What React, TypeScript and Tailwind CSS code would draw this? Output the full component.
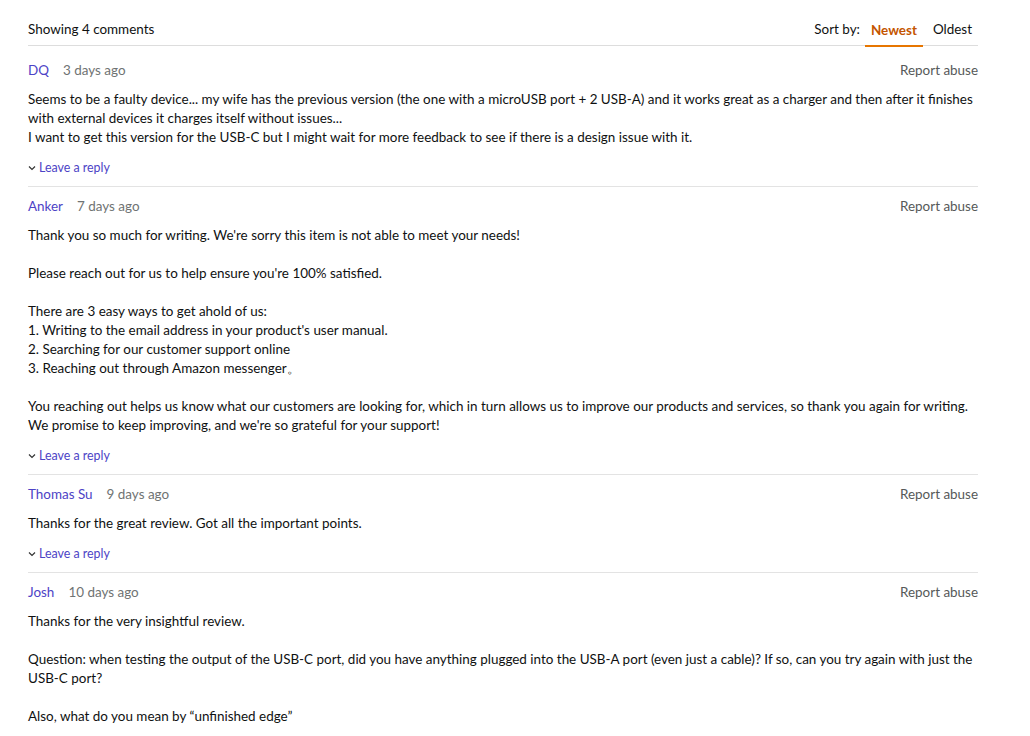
import React from "react";

type C = { name: string; time: string; body: string };

const comments: C[] = [
  {
    name: "DQ",
    time: "3 days ago",
    body:
      "Seems to be a faulty device... my wife has the previous version (the one with a microUSB port + 2 USB-A) and it works great as a charger and then after it finishes with external devices it charges itself without issues...\nI want to get this version for the USB-C but I might wait for more feedback to see if there is a design issue with it.",
  },
  {
    name: "Anker",
    time: "7 days ago",
    body:
      "Thank you so much for writing. We're sorry this item is not able to meet your needs!\n\nPlease reach out for us to help ensure you're 100% satisfied.\n\nThere are 3 easy ways to get ahold of us:\n1. Writing to the email address in your product's user manual.\n2. Searching for our customer support online\n3. Reaching out through Amazon messenger\u3002\n\nYou reaching out helps us know what our customers are looking for, which in turn allows us to improve our products and services, so thank you again for writing.\nWe promise to keep improving, and we're so grateful for your support!",
  },
  {
    name: "Thomas Su",
    time: "9 days ago",
    body: "Thanks for the great review. Got all the important points.",
  },
  {
    name: "Josh",
    time: "10 days ago",
    body:
      "Thanks for the very insightful review.\n\nQuestion: when testing the output of the USB-C port, did you have anything plugged into the USB-A port (even just a cable)? If so, can you try again with just the USB-C port?\n\nAlso, what do you mean by \u201cunfinished edge\u201d",
  },
];

function Chevron() {
  return (
    <svg width="8" height="6" viewBox="0 0 8 6" className="mr-[3px]">
      <path d="M1 1.5 L4 4.5 L7 1.5" fill="none" stroke="#333" strokeWidth="1.2" />
    </svg>
  );
}

export default function App() {
  return (
    <div
      className="bg-white min-h-[736px] text-[13.45px] text-[#0f1111]"
      style={{ fontFamily: "Lato, 'Noto Sans', sans-serif" }}
    >
      <div className="ml-[28px] w-[950px]">
        <div className="flex items-end justify-between border-b border-[#dddddd] pt-[20px]">
          <div className="leading-[19px] pb-[6px]">Showing 4 comments</div>
          <div className="flex items-end">
            <span className="leading-[19px] pb-[6px] mr-[5px]">Sort by:</span>
            <span className="leading-[19px] px-[6px] pb-[5px] border-b-2 border-[#e77600] -mb-[2px] font-bold text-[#c45500]">
              Newest
            </span>
            <span className="leading-[19px] px-[6px] ml-[4px] pb-[6px]">Oldest</span>
          </div>
        </div>
        <div className="mt-[5px]">
          {comments.map((c, i) => (
            <div
              key={i}
              className={
                "pt-[10px] " + (i < comments.length - 1 ? "pb-[10px] border-b border-[#e3e3e3]" : "")
              }
            >
              <div className="flex justify-between leading-[19px] mb-[10px]">
                <div className="flex">
                  <span className="text-[#4d43c6]">{c.name}</span>
                  <span className="ml-[14px] text-[#6f7373]">{c.time}</span>
                </div>
                <span className="text-[#565959]">Report abuse</span>
              </div>
              <div className="leading-[19px] whitespace-pre-line">{c.body}</div>
              {i < comments.length - 1 && (
                <div className="mt-[12px] h-[17px] flex items-center text-[12.4px] leading-[17px] text-[#4d43c6]">
                  <Chevron />
                  <span>Leave a reply</span>
                </div>
              )}
            </div>
          ))}
        </div>
      </div>
    </div>
  );
}
